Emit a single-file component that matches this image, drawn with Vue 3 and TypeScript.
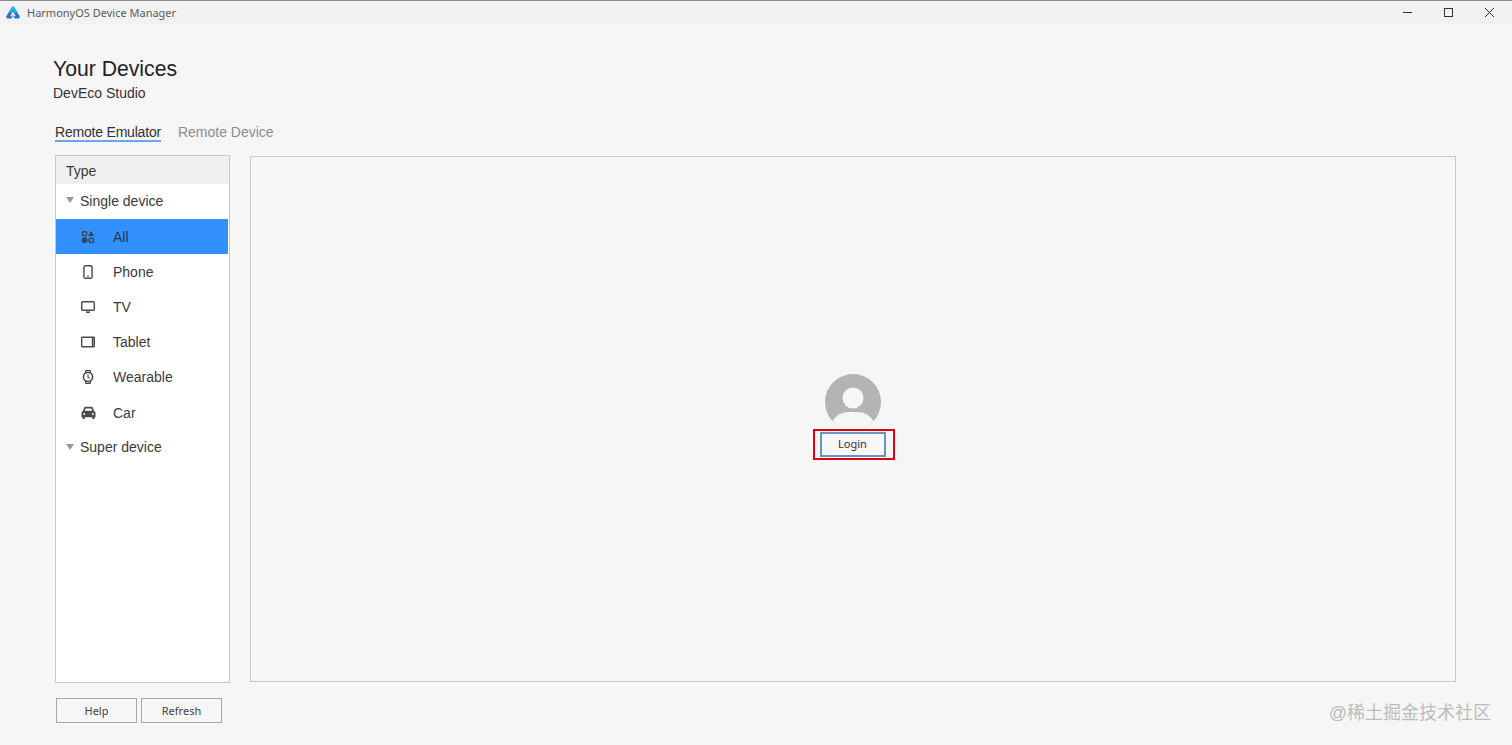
<script setup lang="ts">
const deviceItems = [
  { id: 'all', label: 'All' },
  { id: 'phone', label: 'Phone' },
  { id: 'tv', label: 'TV' },
  { id: 'tablet', label: 'Tablet' },
  { id: 'wearable', label: 'Wearable' },
  { id: 'car', label: 'Car' },
]
</script>

<template>
  <div class="window">
    <header class="title-bar">
      <svg class="logo" width="14" height="13" viewBox="0 0 14 13">
        <path d="M7 .4 Q7.8 .4 8.4 1.4 L13.5 10 Q14.4 12.4 12.4 12.4 L8.6 12.4 L7 9.6 L5.4 12.4 L1.6 12.4 Q-.4 12.4 .5 10 L5.6 1.4 Q6.2 .4 7 .4 Z" fill="#2b74c4" />
        <path d="M7 .4 Q7.8 .4 8.4 1.4 L11 5.8 L9 7 L7 4.4 L5 7 L3 5.8 L5.6 1.4 Q6.2 .4 7 .4 Z" fill="#2fb0ec" />
        <path d="M7 5.4 L9.8 10.2 L7.9 10.2 L7 8.7 L6.1 10.2 L4.2 10.2 Z" fill="#f2f2f2" />
      </svg>
      <span class="app-name">HarmonyOS Device Manager</span>
      <div class="win-controls">
        <svg width="11" height="11" viewBox="0 0 11 11"><path d="M1 5.5H10" stroke="#333" stroke-width="1" /></svg>
        <svg width="11" height="11" viewBox="0 0 11 11"><rect x="1.5" y="1.5" width="8" height="8" fill="none" stroke="#333" stroke-width="1" /></svg>
        <svg width="11" height="11" viewBox="0 0 11 11"><path d="M1 1L10 10M10 1L1 10" stroke="#333" stroke-width="1" /></svg>
      </div>
    </header>

    <main class="content">
      <h1 class="heading">Your Devices</h1>
      <p class="subheading">DevEco Studio</p>

      <nav class="tabs">
        <span class="tab active">Remote Emulator</span>
        <span class="tab">Remote Device</span>
      </nav>

      <div class="panels">
        <aside class="sidebar">
          <div class="side-head">Type</div>
          <div class="group-row">
            <span class="caret"></span>
            <span>Single device</span>
          </div>
          <div
            v-for="item in deviceItems"
            :key="item.id"
            class="device-row"
            :class="{ selected: item.id === 'all' }">
            <span class="device-icon">
              <svg v-if="item.id === 'all'" width="14" height="14" viewBox="0 0 14 14" fill="#33465c">
                <rect x="1.6" y="1.6" width="4" height="4" rx=".8" fill="none" stroke="#33465c" stroke-width="1.3" />
                <path d="M10 .8 L13 6 H7.2 Z" />
                <circle cx="3.6" cy="10.2" r="2.9" />
                <rect x="8.2" y="8.2" width="4.2" height="4.2" rx="1" fill="none" stroke="#33465c" stroke-width="1.5" />
              </svg>
              <svg v-else-if="item.id === 'phone'" width="14" height="14" viewBox="0 0 14 14" fill="none">
                <rect x="2.9" y=".7" width="8.2" height="12.6" rx="1.6" stroke="#4a4a4a" stroke-width="1.4" />
                <path d="M5.8 11.2H8.2" stroke="#4a4a4a" stroke-width="1" />
              </svg>
              <svg v-else-if="item.id === 'tv'" width="14" height="14" viewBox="0 0 14 14" fill="none">
                <rect x=".7" y="1.7" width="12.6" height="8.6" rx="1" stroke="#4a4a4a" stroke-width="1.4" />
                <path d="M5 12.2H9" stroke="#4a4a4a" stroke-width="1.5" />
              </svg>
              <svg v-else-if="item.id === 'tablet'" width="14" height="14" viewBox="0 0 14 14" fill="none">
                <rect x=".7" y="2.2" width="12.6" height="9.6" rx=".6" stroke="#4a4a4a" stroke-width="1.4" />
                <path d="M11.6 3V11" stroke="#4a4a4a" stroke-width="1.6" />
              </svg>
              <svg v-else-if="item.id === 'wearable'" width="14" height="14" viewBox="0 0 14 14" fill="none">
                <circle cx="7" cy="7" r="4.6" stroke="#4a4a4a" stroke-width="1.6" />
                <path d="M4.4 2.6L5 .4H9L9.6 2.6M4.4 11.4L5 13.6H9L9.6 11.4" stroke="#4a4a4a" stroke-width="1.4" />
                <path d="M7 4.4V7.2L8.8 8.4" stroke="#4a4a4a" stroke-width="1.1" />
              </svg>
              <svg v-else width="15" height="14" viewBox="0 0 14 14">
                <path d="M2.6 1.8Q2.9 .8 4 .8H10Q11.1 .8 11.4 1.8L12.6 5Q14 5.6 14 7V11.2H13V13H10.8V11.2H3.2V13H1V11.2H0V7Q0 5.6 1.4 5Z" fill="#4a4a4a" />
                <path d="M3.2 4.8L4.1 2.4H9.9L10.8 4.8Z" fill="#fff" />
                <circle cx="2.6" cy="8" r="1" fill="#fff" />
                <circle cx="11.4" cy="8" r="1" fill="#fff" />
              </svg>
            </span>
            <span>{{ item.label }}</span>
          </div>
          <div class="group-row super">
            <span class="caret"></span>
            <span>Super device</span>
          </div>
        </aside>

        <section class="stage">
          <svg class="avatar" width="56" height="56" viewBox="0 0 56 56">
            <circle cx="28" cy="28" r="28" fill="#b4b4b4" />
            <circle cx="28" cy="24" r="10.5" fill="#f6f6f6" />
            <path d="M7.5 47 Q13 38 24 38 H32 Q43 38 48.5 47 Q40 56 28 56 Q16 56 7.5 47 Z" fill="#f6f6f6" />
          </svg>
          <div class="login-mark">
            <button class="login-btn" type="button">Login</button>
          </div>
        </section>
      </div>

      <footer class="actions">
        <button class="plain-btn" type="button">Help</button>
        <button class="plain-btn" type="button">Refresh</button>
      </footer>
    </main>

    <span class="watermark">@稀土掘金技术社区</span>
  </div>
</template>

<style>
html,
body {
  margin: 0;
  background: #f6f6f6;
}
</style>

<style scoped>
.window {
  position: relative;
  width: 1512px;
  height: 745px;
  overflow: hidden;
  background: #f6f6f6;
  color: #333;
  font-family: "Liberation Sans", Arial, sans-serif;
}
.title-bar {
  box-sizing: border-box;
  height: 24px;
  display: flex;
  align-items: center;
  padding: 0 17px 0 6px;
  background: #f2f2f2;
  border-top: 1px solid #8a8a8a;
}
.logo {
  margin-right: 7px;
}
.app-name {
  font-family: "Noto Sans", sans-serif;
  font-size: 11px;
  color: #5c5c5c;
}
.win-controls {
  margin-left: auto;
  display: flex;
  gap: 30px;
}
.content {
  padding: 32px 0 0 53px;
}
.heading {
  margin: 0;
  font-size: 21.2px;
  line-height: 26px;
  font-weight: 400;
  color: #222;
}
.subheading {
  margin: 2px 0 0;
  font-size: 14px;
  line-height: 18px;
  color: #333;
}
.tabs {
  margin: 22px 0 0 2px;
  display: flex;
  gap: 17px;
  font-size: 14px;
  line-height: 17px;
}
.tab {
  color: #8e8e8e;
  height: 17px;
}
.tab.active {
  color: #333;
  letter-spacing: -0.2px;
  height: 16px;
  border-bottom: 2px solid #6aa5f0;
}
.panels {
  margin: 13px 0 0 2px;
  display: flex;
  align-items: flex-start;
  gap: 20px;
}
.sidebar {
  box-sizing: border-box;
  width: 175px;
  height: 528px;
  border: 1px solid #c8c8c8;
  background: #fff;
  font-size: 14px;
  color: #3a3a3a;
}
.side-head {
  height: 28px;
  line-height: 30px;
  padding-left: 10px;
  background: #f0f0f0;
}
.group-row {
  box-sizing: border-box;
  height: 35px;
  display: flex;
  align-items: center;
  gap: 6px;
  padding: 0 0 2px 10px;
}
.super {
  height: 34px;
  padding-bottom: 0;
}
.caret {
  width: 0;
  height: 0;
  margin-top: -1px;
  border-left: 4.5px solid transparent;
  border-right: 4.5px solid transparent;
  border-top: 6px solid #9a9a9a;
}
.device-row {
  height: 35.2px;
  display: flex;
  align-items: center;
  padding-left: 25px;
}
.device-row.selected {
  background: #3390ff;
  color: #24364c;
  margin-right: 1px;
}
.device-icon {
  width: 32px;
  height: 14px;
  display: flex;
}
.stage {
  box-sizing: border-box;
  width: 1206px;
  height: 526px;
  margin-top: 1px;
  border: 1px solid #c8c8c8;
  display: flex;
  flex-direction: column;
  align-items: center;
  padding-top: 217px;
}
.avatar {
  display: block;
}
.login-mark {
  margin: -1px 0 0 1px;
  border: 2px solid #e00012;
  padding: 1px 7px 1px 5px;
}
.login-btn {
  box-sizing: border-box;
  display: block;
  width: 66px;
  height: 25px;
  padding: 0 0 2px;
  background: #f7f7f7;
  border: 2px solid #6a94bd;
  font-family: "Noto Sans", sans-serif;
  font-size: 11px;
  color: #333;
}
.actions {
  margin: 15px 0 0 3px;
  display: flex;
  gap: 4px;
}
.plain-btn {
  box-sizing: border-box;
  width: 81px;
  height: 25px;
  padding: 0;
  background: #f6f6f6;
  border: 1px solid #a8a8a8;
  font-family: "Noto Sans", sans-serif;
  font-size: 11px;
  color: #444;
}
.watermark {
  position: absolute;
  right: 21px;
  top: 702px;
  font-family: "Liberation Sans", "Noto Sans CJK SC", sans-serif;
  font-size: 18px;
  line-height: 22px;
  color: #bcbcbc;
}
</style>
